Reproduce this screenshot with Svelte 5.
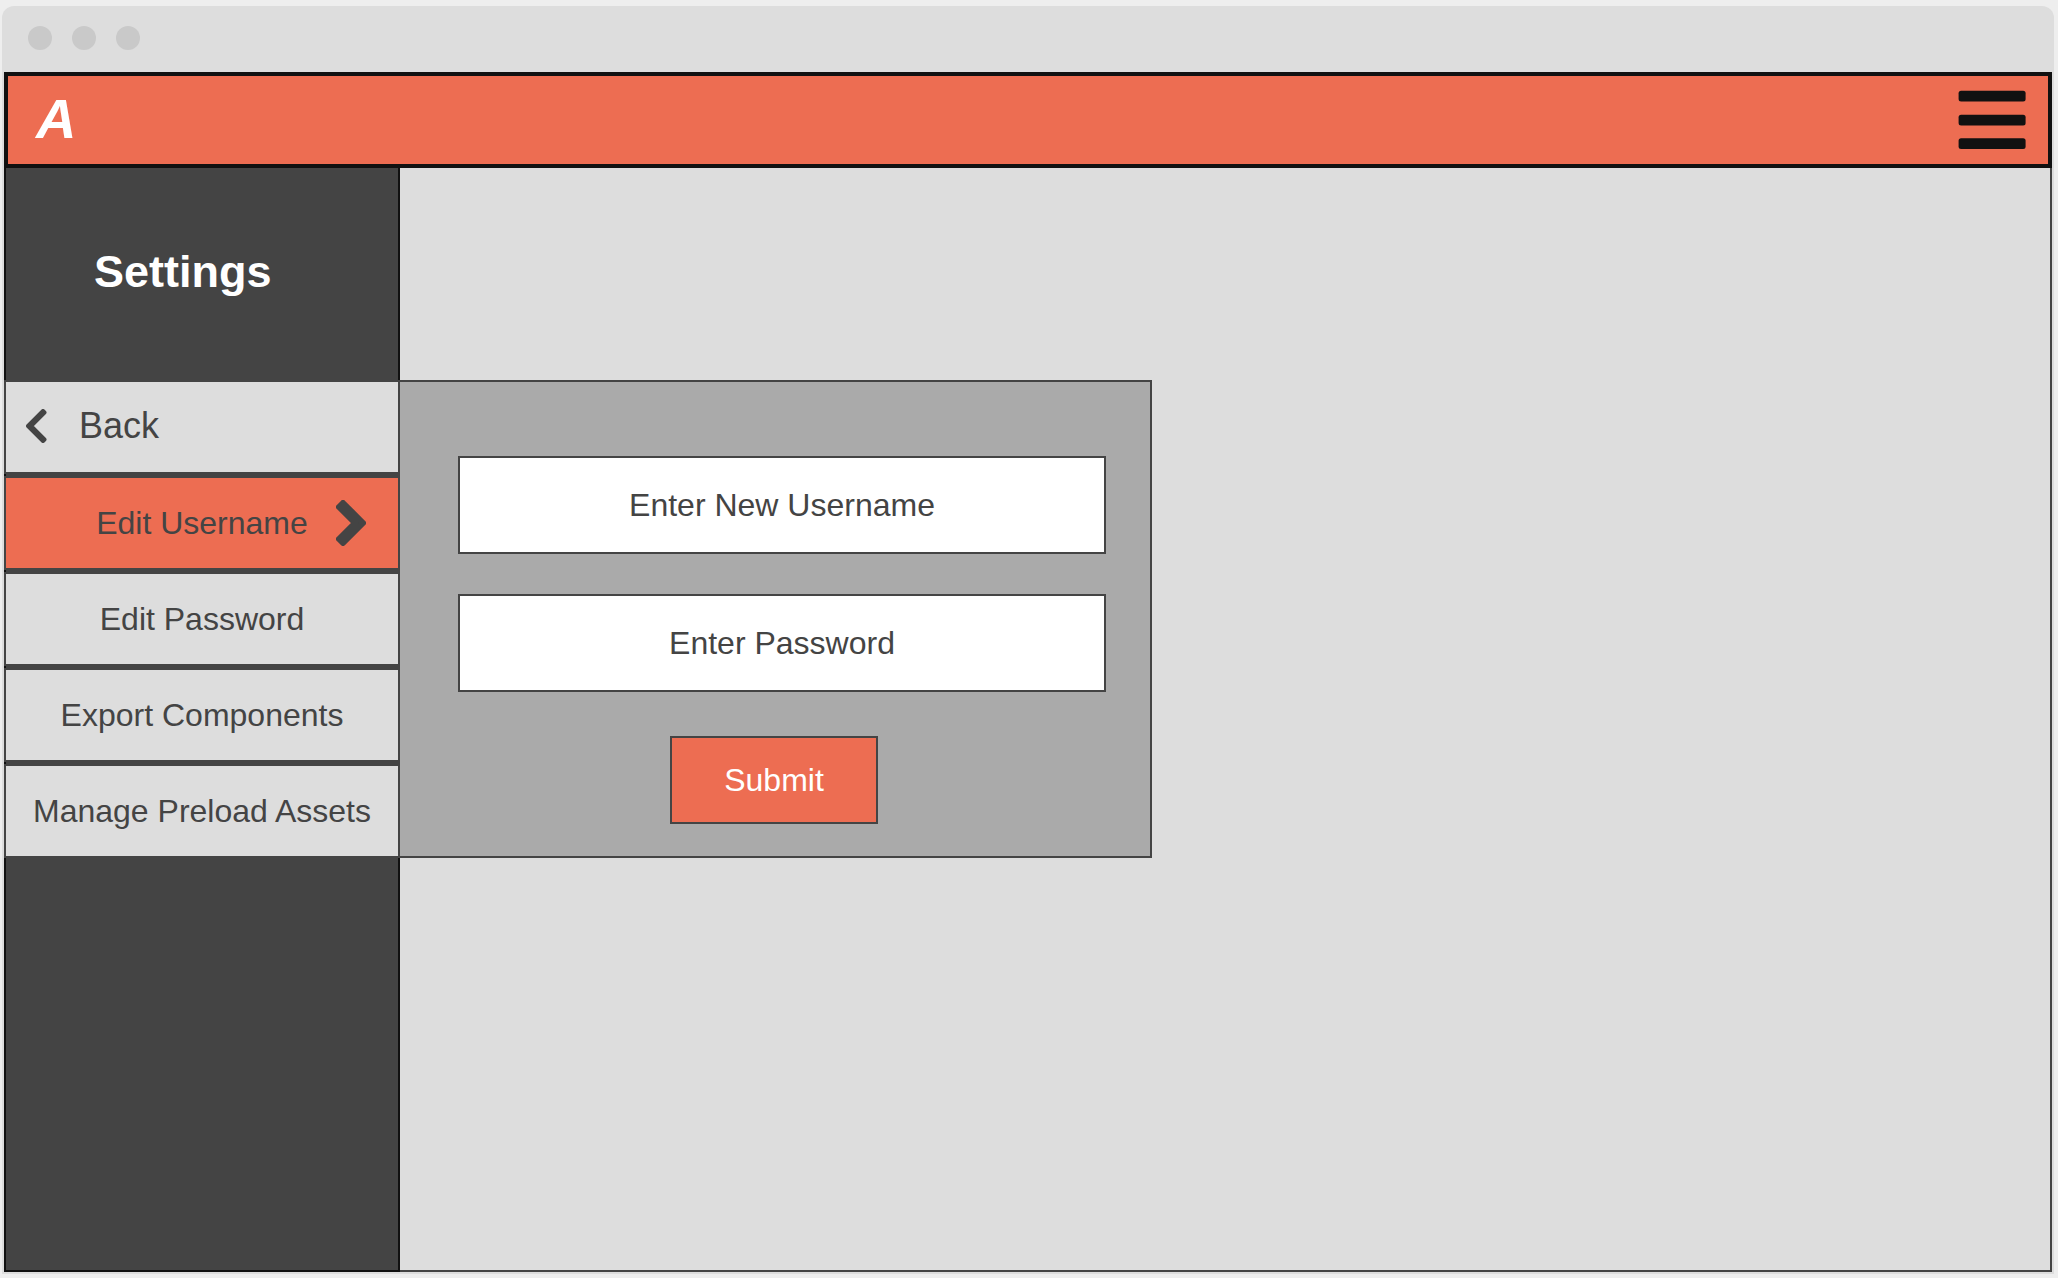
<script>
  const items = ['Edit Username', 'Edit Password', 'Export Components', 'Manage Preload Assets'];
  let active = $state('Edit Username');
  let username = $state('');
  let password = $state('');
</script>

<div class="page">
  <div class="window">
    <div class="titlebar">
      <span class="dot"></span>
      <span class="dot"></span>
      <span class="dot"></span>
    </div>

    <header class="topbar">
      <a class="logo" href="#home">A</a>
      <button class="menu" type="button" aria-label="Menu">
        <svg width="68" height="60" viewBox="0 0 68 60" fill="#111" aria-hidden="true">
          <rect x="0.6" y="0.7" width="67" height="10.8" rx="2.5" />
          <rect x="0.6" y="24.7" width="67" height="10.8" rx="2.5" />
          <rect x="0.6" y="48.3" width="67" height="10.8" rx="2.5" />
        </svg>
      </button>
    </header>

    <div class="body">
      <aside class="sidebar">
        <h1>Settings</h1>
        <nav>
          <button class="item back" type="button">
            <svg width="21" height="34" viewBox="0 0 21 34" aria-hidden="true">
              <path d="M2 17 17 2 18.5 3.5 5 17 18.5 30.5 17 32Z" stroke-width="4" />
            </svg>
            Back
          </button>
          {#each items as item}
            <button
              class="item"
              class:active={active === item}
              type="button"
              onclick={() => (active = item)}
            >
              <span class="name">{item}</span>
              {#if active === item}
                <svg width="30" height="46" viewBox="0 0 30 46" aria-hidden="true">
                  <path d="M27 23 7 3 3 7 19 23 3 39 7 43Z" stroke-width="6" />
                </svg>
              {/if}
            </button>
          {/each}
        </nav>
      </aside>

      <main>
        <form class="panel" onsubmit={(e) => e.preventDefault()}>
          <div class="fields">
            <input
              type="text"
              aria-label="Enter New Username"
              placeholder="Enter New Username"
              bind:value={username}
            />
            <input
              type="password"
              aria-label="Enter Password"
              placeholder="Enter Password"
              bind:value={password}
            />
          </div>
          <button class="submit" type="submit">Submit</button>
        </form>
      </main>
    </div>
  </div>
</div>

<style>
  :global(body) {
    margin: 0;
    background: #eee;
  }

  .page,
  .page * {
    box-sizing: border-box;
  }

  .page {
    display: flex;
    min-height: 100vh;
    padding: 6px 4px 4px 2px;
    font-family: 'Liberation Sans', Arial, sans-serif;
    font-size: 32px;
    color: #444;
  }

  button,
  input {
    margin: 0;
    border-radius: 0;
    font: inherit;
    color: inherit;
  }

  button {
    cursor: pointer;
  }

  .window {
    flex: 1;
    display: flex;
    flex-direction: column;
    padding: 0 2px 2px;
    border-radius: 12px 12px 0 0;
    background: #ddd;
  }

  .titlebar {
    display: flex;
    gap: 20px;
    padding: 20px 24px 22px;
  }

  .dot {
    width: 24px;
    height: 24px;
    border-radius: 50%;
    background: #c9c9c9;
  }

  .topbar {
    display: flex;
    align-items: center;
    justify-content: space-between;
    height: 96px;
    padding: 0 22px 0 28px;
    border: 4px solid #111;
    background: #ed6d52;
  }

  .logo {
    padding-bottom: 2px;
    font-size: 56px;
    font-weight: bold;
    font-style: italic;
    line-height: 64px;
    color: #fff;
    text-decoration: none;
  }

  .menu {
    display: flex;
    padding: 0;
    border: 0;
    background: none;
  }

  .body {
    flex: 1;
    display: flex;
  }

  .sidebar {
    flex: 0 0 396px;
    border: 2px solid #111;
    border-top: 0;
    background: #444;
  }

  h1 {
    display: flex;
    align-items: center;
    height: 212px;
    margin: 0;
    padding: 0 0 4px 88px;
    font-size: 45px;
    color: #fff;
  }

  nav {
    display: flex;
    flex-direction: column;
    gap: 2px;
    margin: 0 -2px;
  }

  .item {
    display: grid;
    grid-template-columns: 1fr auto 1fr;
    align-items: center;
    height: 94px;
    padding: 0;
    border: 2px solid #444;
    background: #ddd;
    white-space: nowrap;
  }

  .item.active {
    background: #ed6d52;
  }

  .item svg {
    fill: #444;
    stroke: #444;
    stroke-linejoin: round;
  }

  .name {
    grid-column: 2;
  }

  .name + svg {
    justify-self: end;
    margin-right: 32px;
  }

  .item.back {
    display: flex;
    gap: 32px;
    padding: 0 0 2px 20px;
    font-size: 36px;
  }

  main {
    flex: 1;
    min-width: 0;
    padding-top: 212px;
    border: solid #444;
    border-width: 0 2px 2px 0;
  }

  .panel {
    display: flex;
    flex-direction: column;
    align-items: center;
    gap: 44px;
    max-width: 754px;
    margin-left: -2px;
    padding: 74px 2px 32px 0;
    border: 2px solid #444;
    background: #aaa;
  }

  .fields {
    align-self: stretch;
    display: flex;
    flex-direction: column;
    gap: 40px;
    padding: 0 42px 0 58px;
  }

  input {
    width: 100%;
    height: 98px;
    padding: 0 16px;
    border: 2px solid #444;
    background: #fff;
    text-align: center;
  }

  input::placeholder {
    color: #444;
    opacity: 1;
  }

  .submit {
    width: 208px;
    height: 88px;
    padding: 0;
    border: 2px solid #444;
    background: #ed6d52;
    color: #fff;
  }
</style>
